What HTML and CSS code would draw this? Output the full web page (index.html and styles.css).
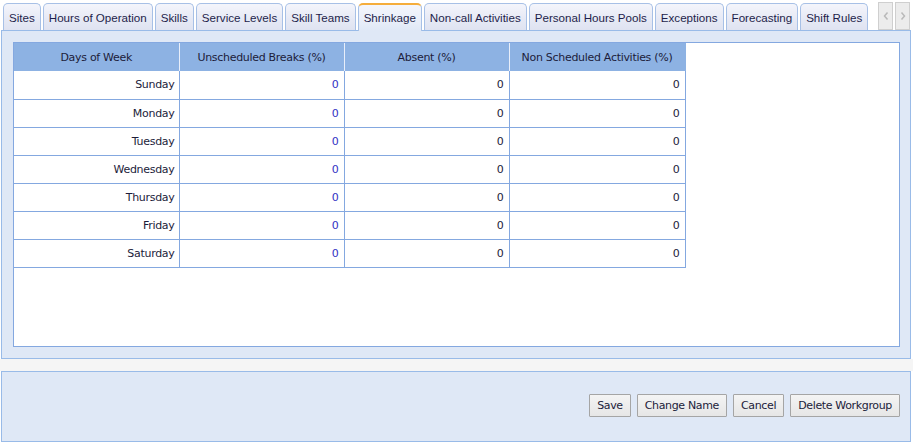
FILE: index.html
```html
<!DOCTYPE html>
<html>
<head>
<meta charset="utf-8">
<title>Workgroup - Shrinkage</title>
<link rel="stylesheet" href="styles.css">
</head>
<body>
<div class="page">
  <div class="tabbar">
    <div class="tabs">
      <div class="tab">Sites</div>
      <div class="tab">Hours of Operation</div>
      <div class="tab">Skills</div>
      <div class="tab">Service Levels</div>
      <div class="tab">Skill Teams</div>
      <div class="tab active">Shrinkage</div>
      <div class="tab">Non-call Activities</div>
      <div class="tab">Personal Hours Pools</div>
      <div class="tab">Exceptions</div>
      <div class="tab">Forecasting</div>
      <div class="tab">Shift Rules</div>
    </div>
    <div class="scrollers">
      <div class="scroll"><svg width="8" height="10" viewBox="0 0 8 10"><polyline points="5.5,1.5 2.5,5 5.5,8.5" fill="none" stroke="#b9b9b9" stroke-width="1.5"/></svg></div>
      <div class="scroll"><svg width="8" height="10" viewBox="0 0 8 10"><polyline points="2.5,1.5 5.5,5 2.5,8.5" fill="none" stroke="#b9b9b9" stroke-width="1.5"/></svg></div>
    </div>
  </div>
  <div class="panel main">
    <div class="grid-box">
      <table class="grid">
        <thead>
          <tr><th class="c1">Days of Week</th><th class="c2">Unscheduled Breaks (%)</th><th class="c3">Absent (%)</th><th class="c4">Non Scheduled Activities (%)</th></tr>
        </thead>
        <tbody>
          <tr><td class="day">Sunday</td><td class="num blue">0</td><td class="num">0</td><td class="num">0</td></tr>
          <tr><td class="day">Monday</td><td class="num blue">0</td><td class="num">0</td><td class="num">0</td></tr>
          <tr><td class="day">Tuesday</td><td class="num blue">0</td><td class="num">0</td><td class="num">0</td></tr>
          <tr><td class="day">Wednesday</td><td class="num blue">0</td><td class="num">0</td><td class="num">0</td></tr>
          <tr><td class="day">Thursday</td><td class="num blue">0</td><td class="num">0</td><td class="num">0</td></tr>
          <tr><td class="day">Friday</td><td class="num blue">0</td><td class="num">0</td><td class="num">0</td></tr>
          <tr><td class="day">Saturday</td><td class="num blue">0</td><td class="num">0</td><td class="num">0</td></tr>
        </tbody>
      </table>
    </div>
  </div>
  <div class="gap"></div>
  <div class="panel footer">
    <button class="btn">Save</button>
    <button class="btn">Change Name</button>
    <button class="btn">Cancel</button>
    <button class="btn">Delete Workgroup</button>
  </div>
</div>
</body>
</html>
```
FILE: styles.css
```css
html, body {
  margin: 0;
  padding: 0;
  background: #ffffff;
}
.page {
  width: 913px;
  height: 442px;
  font-family: "DejaVu Sans", Verdana, sans-serif;
  font-size: 11px;
  overflow: hidden;
}
.tabbar {
  height: 30px;
  display: flex;
  justify-content: space-between;
  align-items: flex-end;
  position: relative;
  z-index: 1;
}
.tabs {
  display: flex;
  gap: 2px;
  padding-left: 3px;
  align-items: flex-end;
  flex-shrink: 0;
}
.tab {
  flex-shrink: 0;
  height: 27px;
  box-sizing: border-box;
  padding: 0 5px;
  border: 1px solid #a7c0e6;
  border-bottom: none;
  border-radius: 5px 5px 0 0;
  background: linear-gradient(#f4f5fb, #e6e9f5 60%, #dfe3f1);
  font-family: "Liberation Sans", Arial, sans-serif;
  font-size: 11.6px;
  color: #1e1e4a;
  line-height: 27px;
  white-space: nowrap;
}
.tab.active {
  height: 28px;
  border-top: 2px solid #f5ad3c;
  background: linear-gradient(#f4f6fc, #e9eef9 60%, #dfe8f6);
  line-height: 26px;
  margin-bottom: -1px;
}
.scrollers {
  display: flex;
  gap: 2px;
  padding-right: 3px;
  align-self: flex-start;
  margin-top: 2px;
  flex-shrink: 0;
}
.scroll {
  width: 13px;
  height: 26px;
  border: 1px solid #cfcfcf;
  background: #ececec;
  display: flex;
  align-items: center;
  justify-content: center;
}
.panel {
  margin-left: 1px;
  width: 910px;
  box-sizing: border-box;
  border: 1px solid #99bbe8;
  background: #dfe8f6;
}
.main {
  height: 329px;
  padding: 11px 10px 0 11px;
}
.grid-box {
  height: 305px;
  box-sizing: border-box;
  border: 1px solid #84a8e0;
  background: #ffffff;
}
.grid {
  border-collapse: collapse;
  table-layout: fixed;
  width: 671px;
  letter-spacing: -0.3px;
}
.grid th {
  height: 28px;
  box-sizing: border-box;
  padding: 0;
  background: #8db2e3;
  color: #1c1c3a;
  font-weight: normal;
  text-align: center;
  border-right: 1px solid #e8eefa;
}
.grid th.c4 { border-right: 1px solid #8db2e3; }
.grid .c1 { width: 165px; }
.grid .c2 { width: 165px; }
.grid .c3 { width: 165px; }
.grid .c4 { width: 176px; }
.grid td {
  height: 28px;
  box-sizing: border-box;
  padding: 0 5px 0 0;
  text-align: right;
  border-right: 1px solid #84a8e0;
  border-bottom: 1px solid #84a8e0;
  color: #1c1c3a;
}
.grid td.day { padding-right: 4px; }
.grid td.blue { color: #3232c4; }
.gap {
  height: 12px;
  background: #f5f5f5;
}
.footer {
  height: 71px;
  display: flex;
  justify-content: flex-end;
  align-items: center;
  gap: 6px;
  padding: 0 10px 3px 0;
}
.btn {
  height: 23px;
  box-sizing: border-box;
  padding: 0 7px;
  border: 1px solid #a5a5a5;
  border-radius: 1px;
  background: linear-gradient(#f4f4f4, #e6e6e6);
  font-family: "DejaVu Sans", Verdana, sans-serif;
  font-size: 11px;
  letter-spacing: -0.35px;
  color: #1c1c3a;
}
```
